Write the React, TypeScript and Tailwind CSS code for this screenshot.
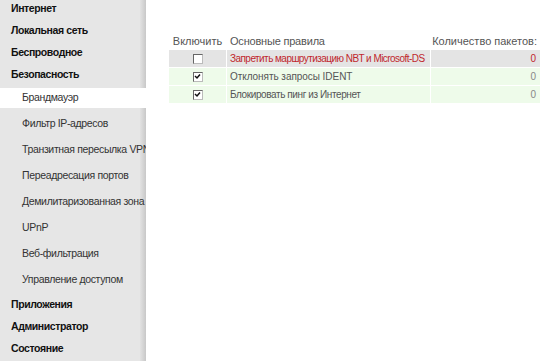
import React from "react";

const top1 = ["Интернет", "Локальная сеть", "Беспроводное", "Безопасность"];
const subs = [
  "Брандмауэр",
  "Фильтр IP-адресов",
  "Транзитная пересылка VPN",
  "Переадресация портов",
  "Демилитаризованная зона",
  "UPnP",
  "Веб-фильтрация",
  "Управление доступом",
];
const top2 = ["Приложения", "Администратор", "Состояние"];

function Box({ checked }: { checked: boolean }) {
  return (
    <div className="w-[10px] h-[10px] border border-t-[#666] border-l-[#666] border-r-[#bbb] border-b-[#bbb] bg-white flex items-center justify-center">
      {checked && (
        <svg width="7" height="7" viewBox="0 0 7 7">
          <path d="M1 3 L3 5 L6 1.5" stroke="#111" strokeWidth="1.5" fill="none" />
        </svg>
      )}
    </div>
  );
}

const rows = [
  { text: "Запретить маршрутизацию NBT и Microsoft-DS", checked: false, red: true, track: "tracking-[-0.55px]" },
  { text: "Отклонять запросы IDENT", checked: true, red: false, track: "tracking-[-0.05px]" },
  { text: "Блокировать пинг из Интернет", checked: true, red: false, track: "tracking-[-0.4px]" },
];

export default function App() {
  return (
    <div
      className="flex w-[546px] h-[361px] overflow-hidden bg-white text-[11px]"
      style={{ fontFamily: '"Liberation Sans", Arial, sans-serif' }}
    >
      <div className="relative w-[146px] h-full bg-[#e6e6e6] overflow-hidden shrink-0">
        <div className="absolute right-0 top-0 h-full w-[6px] bg-gradient-to-r from-[#e2e2e2] to-[#c8c8c8]" />
        <div className="relative -mt-[3px] flex flex-col">
          {top1.map((t) => (
            <div key={t} className="h-[22px] flex items-center pl-[11px] pt-[1px] font-bold text-[10.5px] tracking-[-0.4px] text-[#111] whitespace-nowrap">
              {t}
            </div>
          ))}
          {subs.map((t, i) => (
            <div key={t} className="h-[26px] py-[3px]">
              <div
                className={
                  "h-[20px] flex items-center pl-[22px] whitespace-nowrap text-[10.5px] tracking-[-0.35px] text-[#333] " +
                  (i === 0 ? "bg-white" : "")
                }
              >
                {t}
              </div>
            </div>
          ))}
          {top2.map((t) => (
            <div key={t} className="h-[22px] flex items-center pl-[11px] pt-[1px] font-bold text-[10.5px] tracking-[-0.4px] text-[#111] whitespace-nowrap">
              {t}
            </div>
          ))}
        </div>
      </div>
      <div className="pl-[23px] pt-[33px]">
        <div className="grid grid-cols-[57px_203px_109px] gap-px w-[371px]">
          <div className="h-[16px] flex items-center justify-center text-[#555]">Включить</div>
          <div className="h-[16px] flex items-center pl-[3px] text-[#555] tracking-[-0.2px]">Основные правила</div>
          <div className="h-[16px] flex items-center justify-end pr-[3px] text-[#555]">Количество пакетов:</div>
          {rows.map((r) => {
            const bg = r.red ? "bg-[#e4e4e4]" : "bg-[#eefbea]";
            const col = r.red ? "text-[#c0272d]" : "text-[#555]";
            return (
              <React.Fragment key={r.text}>
                <div className={"h-[17px] flex items-center justify-center " + bg}>
                  <Box checked={r.checked} />
                </div>
                <div className={"h-[17px] flex items-center pl-[3px] whitespace-nowrap text-[10px] " + r.track + " " + bg + " " + col}>
                  {r.text}
                </div>
                <div className={"h-[17px] flex items-center justify-end pr-[4px] text-[10px] " + bg + " " + (r.red ? "text-[#c0272d]" : "text-[#888]")}>
                  0
                </div>
              </React.Fragment>
            );
          })}
        </div>
      </div>
    </div>
  );
}
